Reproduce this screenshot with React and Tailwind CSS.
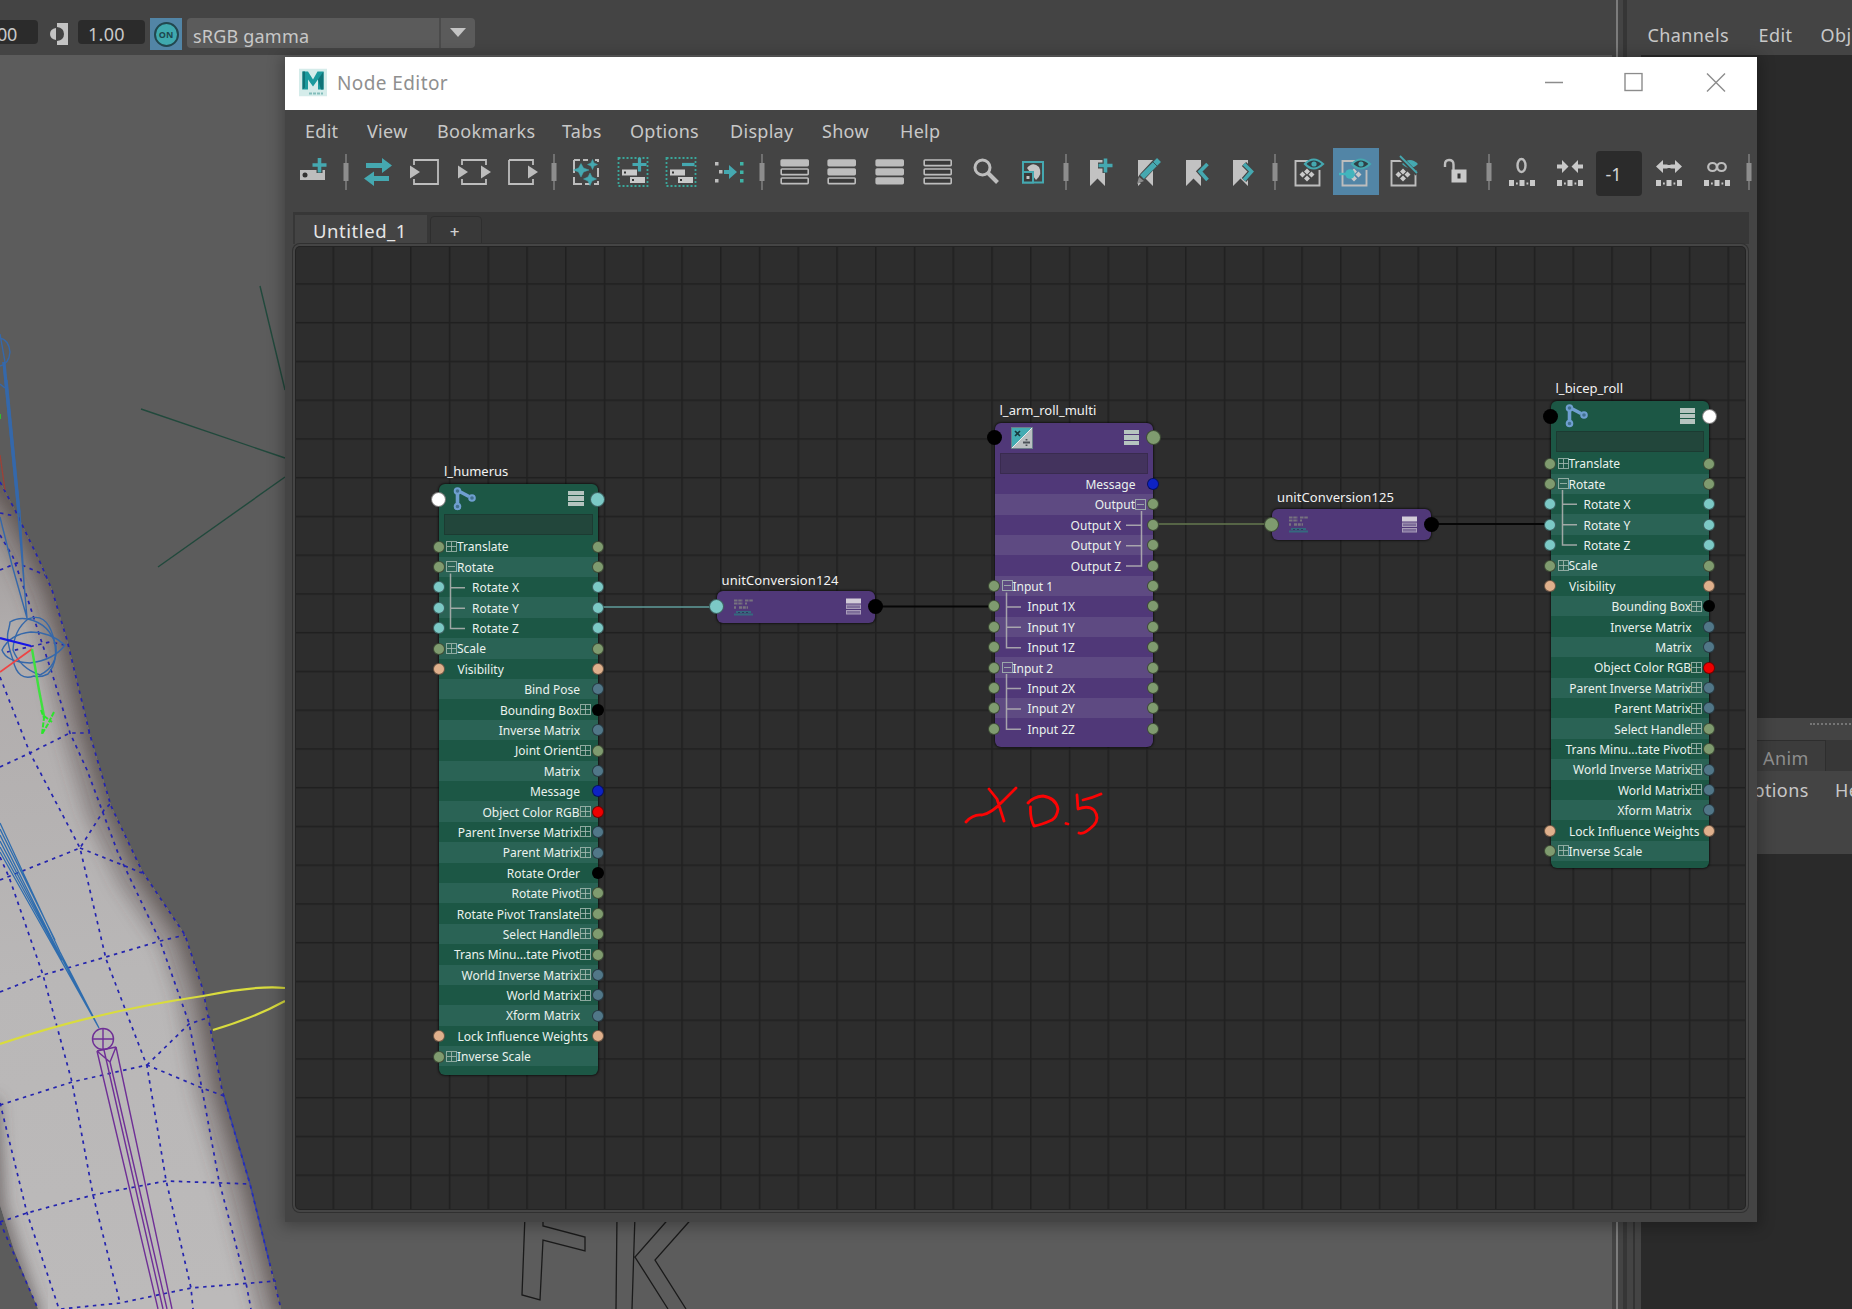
import React from "react";

const GREEN = "#7f9b6f";
const TEAL = "#7cc9c6";
const PEACH = "#dfb08c";
const STEEL = "#517788";
const BLUE = "#0d22c4";
const RED = "#ee0000";
const BLACK = "#000000";
const WHITE = "#ffffff";
const ICON = "#bdbdbd";
const CYAN = "#45a8b0";

const ROW = 20.4;

/* label, side, expander, child, left port, right port */
const transformTop = [
  ["Translate", "L", "+", 0, GREEN, GREEN],
  ["Rotate", "L", "-", 0, GREEN, GREEN],
  ["Rotate X", "L", "", 1, TEAL, TEAL],
  ["Rotate Y", "L", "", 1, TEAL, TEAL],
  ["Rotate Z", "L", "", 1, TEAL, TEAL],
  ["Scale", "L", "+", 0, GREEN, GREEN],
  ["Visibility", "L", "", 0, PEACH, PEACH],
];

const transformEnd = [
  ["Lock Influence Weights", "L", "", 0, PEACH, PEACH],
  ["Inverse Scale", "L", "+", 0, GREEN, null],
];

const out = (label, color, exp = "") => [label, "R", exp, 0, null, color];

const NODES = [
  {
    id: "humerus", title: "l_humerus", kind: "joint", x: 439, y: 483.5, h: 591, header: 52.8,
    portY: 15.5, left: WHITE, right: TEAL,
    rows: [
      ...transformTop,
      out("Bind Pose", STEEL),
      out("Bounding Box", BLACK, "+"),
      out("Inverse Matrix", STEEL),
      out("Joint Orient", GREEN, "+"),
      out("Matrix", STEEL),
      out("Message", BLUE),
      out("Object Color RGB", RED, "+"),
      out("Parent Inverse Matrix", STEEL, "+"),
      out("Parent Matrix", STEEL, "+"),
      out("Rotate Order", BLACK),
      out("Rotate Pivot", GREEN, "+"),
      out("Rotate Pivot Translate", GREEN, "+"),
      out("Select Handle", GREEN, "+"),
      out("Trans Minu...tate Pivot", GREEN, "+"),
      out("World Inverse Matrix", STEEL, "+"),
      out("World Matrix", STEEL, "+"),
      out("Xform Matrix", STEEL),
      ...transformEnd,
    ],
  },
  {
    id: "multi", title: "l_arm_roll_multi", kind: "math", x: 994.5, y: 422.5, h: 324.5, header: 51.3,
    portY: 15, left: BLACK, right: GREEN,
    rows: [
      out("Message", BLUE),
      out("Output", GREEN, "-"),
      ["Output X", "R", "", 1, null, GREEN],
      ["Output Y", "R", "", 1, null, GREEN],
      ["Output Z", "R", "", 1, null, GREEN],
      ["Input 1", "L", "-", 0, GREEN, GREEN],
      ["Input 1X", "L", "", 1, GREEN, GREEN],
      ["Input 1Y", "L", "", 1, GREEN, GREEN],
      ["Input 1Z", "L", "", 1, GREEN, GREEN],
      ["Input 2", "L", "-", 0, GREEN, GREEN],
      ["Input 2X", "L", "", 1, GREEN, GREEN],
      ["Input 2Y", "L", "", 1, GREEN, GREEN],
      ["Input 2Z", "L", "", 1, GREEN, GREEN],
    ],
  },
  {
    id: "bicep", title: "l_bicep_roll", kind: "joint", x: 1550.5, y: 401, h: 467, header: 52.3,
    portY: 15, left: BLACK, right: WHITE,
    rows: [
      ...transformTop,
      out("Bounding Box", BLACK, "+"),
      out("Inverse Matrix", STEEL),
      out("Matrix", STEEL),
      out("Object Color RGB", RED, "+"),
      out("Parent Inverse Matrix", STEEL, "+"),
      out("Parent Matrix", STEEL, "+"),
      out("Select Handle", GREEN, "+"),
      out("Trans Minu...tate Pivot", GREEN, "+"),
      out("World Inverse Matrix", STEEL, "+"),
      out("World Matrix", STEEL, "+"),
      out("Xform Matrix", STEEL),
      ...transformEnd,
    ],
  },
];

const CONVERSIONS = [
  { title: "unitConversion124", x: 716.5, y: 591, left: TEAL },
  { title: "unitConversion125", x: 1272, y: 508.5, left: GREEN },
];

/* top-left corner of the graph canvas on the page */
const OX = 296;
const OY = 247;

function Port({ x, y, r, color }) {
  return (
    <span
      className="absolute rounded-full border border-black/50"
      style={{ left: x - r, top: y - r, width: 2 * r, height: 2 * r, backgroundColor: color }}
    />
  );
}

function Expander({ open }) {
  return (
    <svg className="size-[11px] shrink-0" viewBox="0 0 11 11" fill="none" stroke="#a9bdb4" strokeOpacity="0.8">
      <rect x="0.5" y="0.5" width="10" height="10" />
      <path d={open ? "M2 5.5H9" : "M1 5.5H10M5.5 1V10"} />
    </svg>
  );
}

function JointIcon() {
  return (
    <svg className="h-[26px] w-[26px]" viewBox="0 0 26 26" fill="none" stroke="#6f9fd0" strokeWidth="2">
      <path d="M4.500 8V18M7.500 6L16 10.500" strokeWidth="3.600" />
      <circle cx="4.500" cy="5" r="2.800" fill="#41718f" />
      <circle cx="4.500" cy="20.500" r="2.800" fill="#41718f" />
      <circle cx="19" cy="12" r="2.800" fill="#41718f" />
    </svg>
  );
}

function MathIcon() {
  return (
    <svg className="h-[22px] w-[22px]" viewBox="0 0 22 22">
      <rect x="0.5" y="0.5" width="21" height="21" fill="#b9bfc0" stroke="#6c7f8a" />
      <path d="M1 1H21L1 21Z" fill="#43abb2" />
      <path d="M21 1L1 21" stroke="#ececec" />
      <path d="M4 4L9 9M9 4L4 9" stroke="#173a3e" strokeWidth="1.6" />
      <path d="M12 15.5H19M15.5 12V13.5M15.5 17.5V19" stroke="#4b5257" strokeWidth="1.8" />
    </svg>
  );
}

function TreeLines({ rows, header }) {
  const paths = [];
  rows.forEach((r, i) => {
    if (r[2] !== "-") return;
    const mid = (k) => header + ROW * (k + 0.5);
    const [v, t] = r[1] === "L" ? [11.5, 26] : [146.5, 131];
    paths.push(
      `M${v} ${mid(i) + 6}V${mid(i + 3)}H${t}M${v} ${mid(i + 1)}H${t}M${v} ${mid(i + 2)}H${t}`
    );
  });
  return (
    <svg className="pointer-events-none absolute inset-0 h-full w-full" fill="none" stroke="#b5b5b5" strokeOpacity="0.85" strokeWidth="1.500">
      <path d={paths.join("")} />
    </svg>
  );
}

function Node({ n }) {
  const joint = n.kind === "joint";
  const body = joint ? "bg-[#1c5745]" : "bg-[#503878]";
  const light = joint ? "bg-[#2a6355]" : "bg-[#5e4a82]";
  return (
    <div className="absolute w-[158.5px]" style={{ left: n.x - OX, top: n.y - OY, height: n.h }}>
      <div className="absolute -top-[23px] left-[5px] text-[13px] leading-[20px] whitespace-nowrap text-[#f2f2f2]">{n.title}</div>
      <div className={`flex h-full flex-col overflow-hidden rounded-md shadow-[0_0_2px_1px_rgba(0,0,0,0.55)] ${body}`}>
        <div className="flex shrink-0 flex-col" style={{ height: n.header }}>
          <div className="flex h-[30px] items-center justify-between pr-[14px] pl-[14px]">
            {joint ? <JointIcon /> : <div className="pl-[2px]"><MathIcon /></div>}
            <div className="flex flex-col gap-[1px]">
              <span className="h-[4.5px] w-[15.5px] bg-[#b5c4bf]" />
              <span className="h-[4.5px] w-[15.5px] bg-[#b5c4bf]" />
              <span className="h-[4.5px] w-[15.5px] bg-[#b5c4bf]" />
            </div>
          </div>
          <div className={`mx-[5px] h-[21px] border border-black/15 ${joint ? "bg-[#22463b]" : "bg-[#43335d]"}`} />
        </div>
        {n.rows.map(([label, side, exp, child], i) => (
          <div
            key={label}
            className={`flex h-[20.4px] shrink-0 items-center gap-px text-[12px] leading-none whitespace-nowrap text-[#eaf2ee] ${i % 2 ? light : ""} ${side === "R" ? "flex-row-reverse" : ""}`}
          >
            <span className={child ? "w-[32px]" : exp ? "w-[6px]" : "w-[17.5px]"} />
            {exp && <Expander open={exp === "-"} />}
            <span className={side === "R" || exp ? "-mx-px pt-[2px]" : "pt-[2px]"}>{label}</span>
          </div>
        ))}
      </div>
      <TreeLines rows={n.rows} header={n.header} />
      <Port x={-0.5} y={n.portY} r={7.5} color={n.left} />
      <Port x={158.5} y={n.portY} r={7.5} color={n.right} />
      {n.rows.map((r, i) => (
        <React.Fragment key={r[0]}>
          {r[4] && <Port x={-0.5} y={n.header + ROW * (i + 0.5)} r={6} color={r[4]} />}
          {r[5] && <Port x={158.5} y={n.header + ROW * (i + 0.5)} r={6} color={r[5]} />}
        </React.Fragment>
      ))}
    </div>
  );
}

function Conversion({ c }) {
  return (
    <div className="absolute h-[31.5px] w-[158.5px]" style={{ left: c.x - OX, top: c.y - OY }}>
      <div className="absolute -top-[21.500px] left-[5px] text-[13px] leading-[20px] tracking-[0.1px] whitespace-nowrap text-[#f2f2f2]">{c.title}</div>
      <div className="flex h-full items-center justify-between rounded-md bg-[#503878] pr-[14px] pl-[16px] shadow-[0_0_2px_1px_rgba(0,0,0,0.55)]">
        <svg className="h-[20px] w-[22px]" viewBox="0 0 22 20" fill="none">
          <path d="M1 3.500H10M12 3.500H20M1 6.500H10M12 6.500H14" stroke="#77737f" strokeWidth="2.200" strokeDasharray="3.500 0.800" />
          <path d="M1 10.500H3M6 10.500H15" stroke="#77737f" strokeWidth="2.600" strokeDasharray="3 0.800" />
          <path d="M3 15H18M1 17.500H20" stroke="#35697f" strokeWidth="2" />
          <path d="M5 15.500H16" stroke="#2b3c5c" strokeDasharray="2 2" />
        </svg>
        <svg className="h-[17px] w-[15px]" viewBox="0 0 15 17" fill="none" stroke="#a79bb8">
          <rect x="0.5" y="1" width="14" height="4" fill="#d2ccd8" stroke="#d2ccd8" />
          <rect x="0.5" y="7" width="14" height="3.5" fill="#7d6d99" />
          <rect x="0.5" y="12.5" width="14" height="3.5" fill="#7d6d99" />
        </svg>
      </div>
      <Port x={-0.5} y={15.5} r={7.5} color={c.left} />
      <Port x={159} y={15.5} r={7.5} color={BLACK} />
    </div>
  );
}

/* ---------- toolbar ---------- */

function Slot({ children }) {
  return (
    <div className="flex h-[48px] w-[47.75px] shrink-0 items-center justify-center">
      <svg className="size-8 overflow-visible" viewBox="0 0 32 32" fill="none">{children}</svg>
    </div>
  );
}

function Sep({ wide }) {
  return (
    <div className={`flex h-[48px] shrink-0 items-center justify-center ${wide ? "w-[18px]" : "w-[16.5px]"}`}>
      <svg className="h-[36px] w-[6px]" viewBox="0 0 6 36">
        <path d="M3 0V36" stroke="#858585" strokeWidth="1.4" />
        <rect x="0.5" y="9" width="5" height="18" fill="#8d8d8d" />
      </svg>
    </div>
  );
}

function Frame({ left, right }) {
  return (
    <>
      <path d={`M${left ? "4 9V4H28" : "4 4H28"}${right ? "V9M28 23V28H4" : "V28H4"}${left ? "V23" : "V4"}`} stroke={ICON} strokeWidth="1.8" />
      {left && <path d="M0 9.5L10 16L0 22.5Z" fill={ICON} />}
      {right && <path d="M23 9.5L33 16L23 22.5Z" fill={ICON} />}
    </>
  );
}

function Bars({ fill }) {
  return [0, 1, 2].map((i) => (
    <rect
      key={i}
      x="2.2" y={4 + i * 9} width="27" height="5.6" rx="0.8"
      stroke={ICON} strokeWidth="1.6" fill={i < fill ? ICON : "#3a3a3a"}
    />
  ));
}

function DottedBox({ plus }) {
  return (
    <>
      <rect x="1.5" y="2" width="29" height="28" stroke="#3aa79b" strokeWidth="1.8" strokeDasharray="2 2" />
      <rect x="5" y="13.5" width="15" height="6" fill="#c9c9c9" />
      <rect x="13" y="21" width="15" height="6" fill="#c9c9c9" />
      <path d="M7 16.5H9M15 24H17" stroke="#333" strokeWidth="2" />
      <path d={plus ? "M15.500 8.5H29.5M22.500 2V15.500" : "M17 8.5H29.500"} stroke={CYAN} strokeWidth="3.2" />
    </>
  );
}

function Mark({ children }) {
  return (
    <>
      <path d="M7 4H22V30L14.5 22.5L7 30Z" fill="#c2c2c2" />
      {children}
    </>
  );
}

function EyeBox({ variant }) {
  return (
    <>
      <path d="M16 5H3.500V29.500H27.500V14" stroke={ICON} strokeWidth="1.9" />
      <path
        d="M15 12.500L18 15.500L15 18.500L12 15.500ZM10.500 15.500L13.500 18.500L10.500 21.500L7.500 18.500ZM19.500 15.500L22.500 18.500L19.500 21.500L16.500 18.500ZM15 19.500L18 22.500L15 25.500L12 22.500Z"
        fill="#c9c9c9"
      />
      {variant !== "off" && (
        <>
          <path d="M13 8Q21.500 -1 31 8Q21.500 17 13 8Z" fill="#2f3f45" stroke={CYAN} strokeWidth="2.2" />
          <circle cx="22" cy="8" r="2.600" fill={CYAN} />
        </>
      )}
      {variant === "in" && (
        <>
          <path d="M0 18H8" stroke="#42b5bd" strokeWidth="2.400" />
          <circle cx="11" cy="18" r="4.800" fill="#42b5bd" />
        </>
      )}
      {variant === "off" && (
        <>
          <path d="M14 8Q22 0 30 8Q22 16 14 8Z" fill={CYAN} />
          <path d="M12 1L29 18" stroke="#444" strokeWidth="4" />
          <path d="M12 0L29 17" stroke={CYAN} strokeWidth="1.800" />
        </>
      )}
    </>
  );
}

function Dots() {
  return <path d="M3 24H8V30H3ZM13.500 24H18.500V30H13.500ZM24 24H29V30H24ZM10 26.500H11.800V28.500H10ZM20.500 26.500H22.300V28.500H20.500Z" fill="#c9c9c9" />;
}

function Toolbar() {
  return (
    <div className="flex h-[64px] shrink-0 items-start overflow-hidden pl-[5px]">
      <Slot>
        <rect x="2" y="14" width="25" height="10" fill={ICON} />
        <circle cx="7" cy="19" r="2.500" fill="#333" />
        <path d="M14 9.500H29M21.500 2V17" stroke="#444" strokeWidth="6" />
        <path d="M14.500 9H28.500M21.500 2V16.500" stroke={CYAN} strokeWidth="3.600" />
      </Slot>
      <Sep />
      <Slot>
        <path d="M4 7H20V2L30 9.500L20 17V12H4ZM27 20H12V15.500L2 22.500L12 30V25H27Z" fill={CYAN} />
      </Slot>
      <Slot><Frame left /></Slot>
      <Slot><Frame left right /></Slot>
      <Slot><Frame right /></Slot>
      <Sep />
      <Slot>
        <path d="M4 4H10M13 4H18M25 4H28V6M28 12V21M28 25V28H24M20 28H15M12 28H4V21M4 17V4" stroke={ICON} strokeWidth="2" />
        <path d="M11 7.500L13.500 12L19 14L13.500 16L11 21L8.500 16L3.500 14L8.500 12ZM22.500 3.500L24 7L27.500 8.500L24 10L22.500 13.500L21 10L17.500 8.500L21 7ZM20 17L22 21L26.500 23L22 25L20 29.500L18 25L13.500 23L18 21Z" fill={CYAN} stroke={CYAN} strokeWidth="0.500" />
      </Slot>
      <Slot><DottedBox plus /></Slot>
      <Slot><DottedBox /></Slot>
      <Slot>
        <path d="M2 6H5.500V9.500H2ZM6 14H9.500V17.500H6ZM2 23H5.500V26.500H2Z" fill={ICON} />
        <path d="M27 6H30.500V9.500H27ZM27 14.500H30.500V18H27ZM27 23H30.500V26.500H27Z" fill="#3fb3a6" />
        <path d="M11 14H16V9L24 16L16 23V18H11Z" fill={CYAN} />
      </Slot>
      <Sep wide />
      <Slot><Bars fill={1} /></Slot>
      <Slot><Bars fill={2} /></Slot>
      <Slot><Bars fill={3} /></Slot>
      <Slot><Bars fill={0} /></Slot>
      <Slot>
        <circle cx="12.500" cy="11.500" r="7.500" stroke={ICON} strokeWidth="3" />
        <path d="M18 17L27.500 26.500" stroke={ICON} strokeWidth="4" />
      </Slot>
      <Slot>
        <path d="M10 12Q16 5 22 11Q26 18 19 24Z" fill="#c4c4c4" />
        <rect x="6" y="6" width="20" height="20.500" stroke={CYAN} strokeWidth="2" />
        <rect x="6" y="16" width="10" height="10.500" fill="#393939" stroke={CYAN} strokeWidth="2" />
        <rect x="9.500" y="20" width="3" height="3" fill="#c4c4c4" />
      </Slot>
      <Sep wide />
      <Slot>
        <Mark><path d="M15 9.500H29M22.500 2V17" stroke="#444" strokeWidth="6" /><path d="M15.500 9.500H29.500M22.500 2.500V16.500" stroke={CYAN} strokeWidth="3.600" /></Mark>
      </Slot>
      <Slot>
        <Mark><path d="M8 26L12 20L26 5" stroke="#444" strokeWidth="7" /><path d="M11 21L28 4" stroke={CYAN} strokeWidth="5.500" /><path d="M6 28L8 21L13 25Z" fill="#8b8b8b" /><path d="M22 6L26 10" stroke="#2f5c62" /></Mark>
      </Slot>
      <Slot>
        <Mark><path d="M28.500 8L21 15.500L28.500 24" stroke="#444" strokeWidth="6" /><path d="M28.500 8L21 15.500L28.500 24" stroke={CYAN} strokeWidth="3.600" /></Mark>
      </Slot>
      <Slot>
        <Mark><path d="M18 8L25.500 15.500L18 24" stroke="#444" strokeWidth="6" /><path d="M18 8L25.500 15.500L18 24" stroke={CYAN} strokeWidth="3.600" /></Mark>
      </Slot>
      <Sep wide />
      <Slot><EyeBox /></Slot>
      <div className="mr-[1.500px] ml-[0.500px] h-[47px] w-[46px] bg-[#5285a6]"><div className="-ml-px h-[48px]"><Slot><EyeBox variant="in" /></Slot></div></div>
      <Slot><EyeBox variant="off" /></Slot>
      <div className="mt-[3px] mr-[2.500px] ml-[2px] h-[44px] w-px bg-[#2e2e2e]" />
      <Slot>
        <path d="M5 11V8.500Q5 4 9 4Q13.500 4 13.500 8.500V14" stroke={ICON} strokeWidth="2.400" />
        <rect x="11.500" y="13.500" width="15" height="13" fill="#c9c9c9" />
        <rect x="17.500" y="17.500" width="3" height="5" fill="#333" />
      </Slot>
      <Sep wide />
      <Slot>
        <ellipse cx="15.500" cy="9.500" rx="4" ry="6.500" stroke={ICON} strokeWidth="2.400" />
        <Dots />
      </Slot>
      <Slot>
        <path d="M3 8.500H8V4L14.500 10.500L8 17V12.500H3ZM29 8.500H24V4L17.500 10.500L24 17V12.500H29Z" fill="#c9c9c9" />
        <Dots />
      </Slot>
      <div className="mr-[3.500px] ml-[2px] mt-[3px] flex h-[45px] w-[46px] shrink-0 items-center rounded bg-[#2b2b2b] pt-[2px] pl-[10px] text-[18px] text-[#d4d4d4]">-1</div>
      <Slot>
        <path d="M3 10.500L10 4V8.500H22V4L29 10.500L22 17V12.500H10V17Z" fill="#c9c9c9" />
        <path d="M14.500 8V13H17.500V8Z" fill="#444" />
        <path d="M13 10.500H19" stroke="#c9c9c9" strokeWidth="3" />
        <Dots />
      </Slot>
      <Slot>
        <ellipse cx="11.500" cy="11" rx="4.300" ry="4" stroke={ICON} strokeWidth="2.200" />
        <ellipse cx="20.500" cy="11" rx="4.300" ry="4" stroke={ICON} strokeWidth="2.200" />
        <Dots />
      </Slot>
      <Sep />
    </div>
  );
}

/* ---------- node editor window ---------- */

function Canvas() {
  return (
    <div className="relative h-[962px] w-[1449px] overflow-hidden rounded bg-[#2d2d2d] shadow-[0_0_0_1px_#232323,0_0_0_3px_#454545,0_0_0_4px_#303030]">
      <svg className="absolute inset-0 h-full w-full" fill="none">
        <defs>
          <pattern id="grid" width="38.75" height="38.75" patternUnits="userSpaceOnUse" x="36.5" y="36.2">
            <path d="M0.800 0V38.75M0 0.800H38.75" stroke="#202020" strokeWidth="1.600" />
          </pattern>
        </defs>
        <rect width="1449" height="962" fill="url(#grid)" />
        <path d="M302 360H421" stroke="#5f9c9b" strokeWidth="1.700" />
        <path d="M580 359.500H700M1136 277H1255" stroke="#060606" strokeWidth="2" />
        <path d="M857 277H977" stroke="#64794f" strokeWidth="1.700" />
      </svg>
      {NODES.map((n) => <Node key={n.id} n={n} />)}
      {CONVERSIONS.map((c) => <Conversion key={c.title} c={c} />)}
      {/* pen annotation */}
      <svg className="pointer-events-none absolute inset-0 h-full w-full" fill="none" stroke="#fb0404" strokeWidth="2.800" strokeLinecap="round" strokeLinejoin="round">
        <g transform="translate(-296 -247)">
          <path d="M966 822Q973 814 982 815Q992 813 1003 801L1016 788M989 789L997 799L1004 821M1028 803Q1033 797 1043 796Q1056 798 1058 809Q1057 817 1052 820Q1041 825 1034 826Q1030 818 1030.500 807M1066 823.500L1068 824M1077 795L1078 809Q1088 805 1094 810Q1100 818 1094 825Q1084 835 1079 833M1083 800Q1092 798 1101 794" />
        </g>
      </svg>
    </div>
  );
}

const MENUS = [
  ["Edit", "w-[62px]"], ["View", "w-[70px]"], ["Bookmarks", "w-[125px]"], ["Tabs", "w-[68px]"],
  ["Options", "w-[100px]"], ["Display", "w-[92px]"], ["Show", "w-[78px]"], ["Help", "w-[60px]"],
];

function NodeEditor() {
  return (
    <div className="absolute top-[57px] left-[285px] flex h-[1165px] w-[1472px] flex-col bg-[#444444] shadow-[0_2px_14px_3px_rgba(0,0,0,0.28)]">
      <div className="flex h-[53px] shrink-0 items-center bg-white">
        <svg className="ml-[14px] h-[28px] w-[28px] -translate-y-[1.500px]" viewBox="0 0 28 28">
          <rect width="28" height="28" fill="#d5ecea" />
          <path d="M3.500 21V3H9L14 11L18.500 3H24.500V21H19V11L14 18L9 11V21Z" fill="#1b9a9d" />
          <path d="M3.500 21V3H6V19ZM19 11L24.500 3V21H22Z" fill="#0f7377" />
          <path d="M10 25H24" stroke="#83bdbb" strokeWidth="2.200" strokeDasharray="3 1" />
        </svg>
        <span className="ml-[10px] text-[19px] tracking-[0.4px] text-[#8f8f8f]">Node Editor</span>
        <svg className="mr-[31px] ml-auto h-[20px] w-[182px] -translate-y-[1.500px]" viewBox="0 0 182 20" fill="none" stroke="#8c8c8c" strokeWidth="1.400">
          <path d="M1 10H19M163 1L181 19M181 1L163 19" />
          <rect x="81" y="1" width="17" height="17" />
        </svg>
      </div>
      <div className="flex h-[38px] shrink-0 items-center pt-[4px] pl-[20px] text-[18px] leading-none tracking-[0.300px] text-[#c8c8c8]">
        {MENUS.map(([m, w]) => <span key={m} className={w}>{m}</span>)}
      </div>
      <Toolbar />
      <div className="mx-[8px] flex h-[32px] shrink-0 items-end bg-[#373737] pl-[2px]">
        <div className="flex h-[29px] w-[132px] items-center bg-[#444444] pt-[4px] pl-[18px] text-[18.500px] leading-none tracking-[0.550px] text-[#e6e6e6]">Untitled_1</div>
        <div className="ml-[3px] flex h-[28px] w-[52px] items-center justify-center rounded-t border border-[#2e2e2e] bg-[#393939] pt-[2px] pr-[3px] text-[17px] leading-none font-medium text-[#d0d0d0]">+</div>
      </div>
      <div className="mx-[7px] flex pt-[3px] pl-[4px]"><Canvas /></div>
    </div>
  );
}

/* ---------- 3D viewport ---------- */

function Viewport() {
  return (
    <svg className="block h-[1254px] w-[1612px] shrink-0 bg-[#5c5c5c]" viewBox="0 55 1612 1254" fill="none">
      <defs>
        <linearGradient id="skin" gradientUnits="userSpaceOnUse" x1="0" y1="480" x2="60" y2="1309">
          <stop offset="0" stopColor="#9a9594" />
          <stop offset="0.180" stopColor="#b0acac" />
          <stop offset="0.600" stopColor="#b9b7b7" />
          <stop offset="1" stopColor="#bcbaba" />
        </linearGradient>
        <filter id="soft" x="-30%" y="-10%" width="160%" height="120%"><feGaussianBlur stdDeviation="8" /></filter>
        <clipPath id="armClip">
          <path d="M0 482L15 510L40 562L52 590L67 640L90 735L111 806L142 871L185 935L203 990L222 1090L250 1184L281 1309H38L14 1250L0 1205Z" />
        </clipPath>
      </defs>
      <g clipPath="url(#armClip)">
        <rect x="0" y="480" width="290" height="830" fill="url(#skin)" />
        <path d="M-12 470L15 510L40 562L52 590L67 640L90 735L111 806L142 871L185 935L203 990L222 1090L250 1184L285 1320" stroke="#4d4442" strokeOpacity="0.350" strokeWidth="56" filter="url(#soft)" />
        <path d="M-10 470L17 510L42 562L54 590L69 640L92 735L113 806L144 871L187 935L205 990L224 1090L252 1184L287 1320" stroke="#4d4442" strokeOpacity="0.750" strokeWidth="16" filter="url(#soft)" />
        <path d="M-10 1100L-4 1205L10 1250L34 1320" stroke="#4d4442" strokeOpacity="0.700" strokeWidth="16" filter="url(#soft)" />
      </g>
      <g stroke="#2424ae" strokeWidth="1.700" strokeDasharray="3.500 4.500">
        <path d="M0 482L15 510L40 562L52 590L67 640L90 735L111 806L142 871L185 935L203 990L222 1090L250 1184L281 1309" />
        <path d="M0 535L13 557L27 597L42 643L52 673L70 733L87 770L118 853L160 941L189 1023L202 1089L219 1181L246 1283L251 1309" />
        <path d="M0 677L30 753L80 848L106 959L127 1014L147 1066L166 1180L191 1288L193 1309" />
        <path d="M0 857L9 877L43 975L72 1082L93 1195L120 1303" />
        <path d="M0 1103L27 1213L59 1309M0 1222L38 1309" />
        <path d="M0 513L15 516M0 570L17 563L45 575M7 652L50 642L65 645M0 767L30 753L70 733L90 733" />
        <path d="M0 880L80 848L104 810L111 803M80 848L125 866L142 873" />
        <path d="M0 992L43 975L106 957L160 941L185 935M147 1065L189 1024L210 1017" />
        <path d="M0 1105L72 1082L147 1065L202 1088L224 1096" />
        <path d="M0 1222L27 1213L93 1195L166 1181L250 1184M61 1309L120 1303L191 1288L276 1281" />
      </g>
      <path d="M224 1096L250 1184L270 1265" stroke="#2233c0" strokeOpacity="0.700" strokeWidth="1.300" />
      <path d="M0 455L5 490" stroke="#c92f1f" strokeOpacity="0.600" strokeWidth="1.300" />
      <path d="M0 414V419" stroke="#22dd22" strokeWidth="1.500" />
      <g stroke="#3568aa" strokeWidth="1.400">
        <path d="M0 338Q9 340 10 352Q9 364 0 366M0 334L5 362M3 362L18 513L27 618M7 380L20 513L24 583M0 517L12 565L27 618M0 384L5 388" />
        <path d="M4 362L19 513" strokeWidth="3" />
        <path d="M10 622Q18 617 28 619Q46 612 53 636Q60 660 48 674Q40 678 34 676Q18 682 13 660Q6 640 8 632Q10 624 10 622Z" />
        <path d="M2 650Q10 634 31 632Q50 632 65 645Q54 660 30 663Q6 662 2 650Z" />
        <path d="M28 619Q50 624 56 646Q58 666 40 675Q20 668 13 650Q14 630 28 619Z" />
      </g>
      <path d="M0 638L31 646" stroke="#1616e6" strokeWidth="2.200" />
      <path d="M32 649L0 672" stroke="#ee4444" strokeWidth="1.800" />
      <path d="M32 649L39 690L44 716" stroke="#3fe03f" strokeWidth="2.400" />
      <path d="M41 710L44 718L42 734M54 712L48 724L42 734M44 716L52 722" stroke="#2be42b" strokeWidth="2" strokeDasharray="5 1.500" />
      <path d="M0 823L60 952L99 1028M0 829L55 940M0 835L60 955L99 1028M0 841L55 946M0 847L62 960M0 852L58 955L99 1028" stroke="#2f6dae" strokeWidth="1.300" />
      <path d="M0 1044Q94 1012 203 996Q258 985 285 988M213 1030Q254 1018 285 1001" stroke="#d9dc3e" strokeWidth="2.200" />
      <g stroke="#6f2f96" strokeWidth="1.400">
        <circle cx="103" cy="1039" r="10.500" />
        <path d="M93 1039H114M103 1028V1050M97 1051L116 1047M97 1051L158 1309M116 1047L172 1309M104 1050L163 1309M110 1062L167 1309M97 1051L110 1062L116 1047" />
      </g>
      <path d="M260 286L285 390M141 409L285 458M285 477L158 567" stroke="#21493c" strokeWidth="1.400" />
      <path d="M525 1215L522 1295L540 1300L543 1240L585 1251V1237L543 1226V1215M617 1215L616 1309M635 1215L632 1309M672 1215L635 1257L668 1309M695 1215L655 1260L686 1309" stroke="#1a1a1a" strokeWidth="1.300" />
    </svg>
  );
}

function TopBar() {
  return (
    <div className="flex h-[55px] w-[1612px] shrink-0 items-start bg-[#444444] pt-[18px] text-[18px] leading-none text-[#c8c8c8]">
      <div className="mt-[2px] flex h-[24px] w-[38px] items-center rounded-r bg-[#2b2b2b] pt-[3px]"><span className="-ml-[3px] tracking-[-0.300px]">00</span></div>
      <svg className="mt-[5px] ml-[11px] h-[22px] w-[20px]" viewBox="0 0 20 22">
        <path d="M8 0H19V22H8V18Q15 17 15 11Q15 5 8 4Z" fill="#c4c4c4" />
        <path d="M7 5Q1 6 1 11Q1 16 7 17Z" fill="#c4c4c4" />
      </svg>
      <div className="mt-[2px] ml-[9px] flex h-[24px] w-[67px] items-center rounded bg-[#2b2b2b] pt-[3px] pl-[10px] tracking-[0.300px]">1.00</div>
      <div className="ml-[5px] flex h-[32px] w-[32px] items-center justify-center bg-[#5285a6]">
        <div className="flex size-[25px] items-center justify-center rounded-full border-2 border-[#22474f] bg-[#3fa9ae] text-[9px] font-bold text-[#1d474d]">ON</div>
      </div>
      <div className="ml-[5px] flex h-[30px] w-[288px] rounded-sm bg-[#5b5b5b]">
        <span className="w-[254px] border-r-2 border-[#4b4b4b] pt-[9px] pl-[6px] tracking-[0.200px]">sRGB gamma</span>
        <svg className="mt-[10px] ml-[9px] h-[9px] w-[16px]" viewBox="0 0 16 9"><path d="M0 0H16L8 9Z" fill="#c4c4c4" /></svg>
      </div>
    </div>
  );
}

function RightPanel() {
  return (
    <div className="flex flex-1 flex-col bg-[#2a2a2a] text-[18px] leading-none tracking-[0.400px] whitespace-nowrap text-[#c8c8c8]">
      <div className="flex h-[55px] shrink-0 items-center bg-[#444444] pt-[15px] pl-[6.500px]">
        <span className="w-[111px]">Channels</span>
        <span className="w-[62px]">Edit</span>
        <span>Object</span>
      </div>
      <div className="mt-[663px] h-[136px] bg-[#444444]">
        <div className="flex h-[22px] justify-end pt-[5px]"><span className="h-px w-[68px] border-t-2 border-dotted border-[#757575]" /></div>
        <div className="flex h-[31px] bg-[#373737]">
          <span className="h-full w-[185px] border-t border-r border-[#2e2e2e] bg-[#3c3c3c] pt-[8px] pl-[122px] text-[#8e8e8e]">Anim</span>
        </div>
        <div className="flex pt-[10px] pl-[98px]"><span className="w-[96px]">Options</span><span>Help</span></div>
      </div>
    </div>
  );
}

export default function App() {
  return (
    <div className="relative flex h-[1309px] w-[1852px] overflow-hidden bg-[#2a2a2a] font-['Noto_Sans','Open_Sans',sans-serif]">
      <div className="flex w-[1612px] shrink-0 flex-col">
        <TopBar />
        <Viewport />
      </div>
      <div className="flex w-[29px] shrink-0 bg-[#444444]">
        <span className="ml-[4px] w-[1.500px] bg-[#7c7c7c]" />
        <span className="ml-[5px] w-[4px] bg-[#363636]" />
        <span className="mt-[1000px] ml-[6px] w-[2px] bg-[#333333]" />
      </div>
      <RightPanel />
      <NodeEditor />
    </div>
  );
}
